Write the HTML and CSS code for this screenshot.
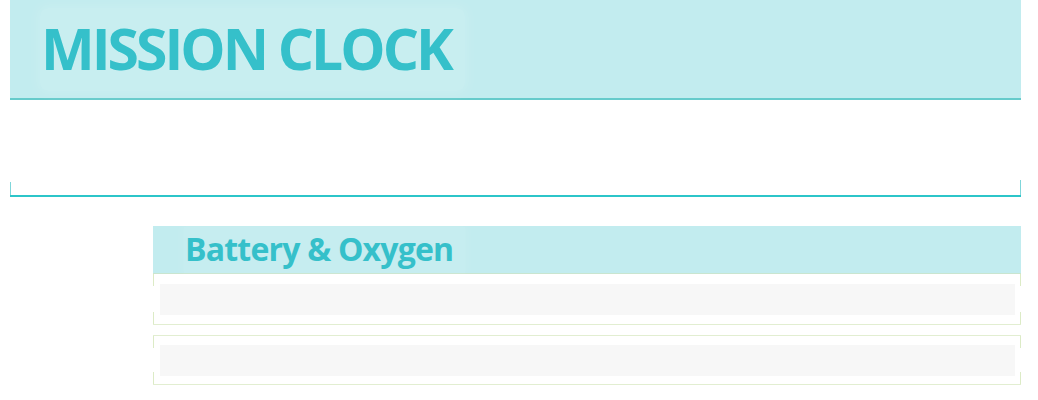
FILE: index.html
```html
<!DOCTYPE html>
<html>
<head>
<meta charset="utf-8">
<link rel="stylesheet" href="styles.css">
</head>
<body>
<div class="page">
  <header class="masthead">
    <h1 class="title">MISSION CLOCK</h1>
  </header>
  <div class="clock-panel"></div>
  <section class="module">
    <div class="module-head">
      <h2 class="module-title">Battery &amp; Oxygen</h2>
    </div>
    <div class="row row-first"><div class="bar"></div></div>
    <div class="row"><div class="bar"></div></div>
  </section>
</div>
</body>
</html>
```
FILE: styles.css
```css
html, body {
  margin: 0;
  padding: 0;
  background: #ffffff;
}
.page {
  width: 1011px;
  margin-left: 10px;
  font-family: "Open Sans", "Liberation Sans", sans-serif;
}
.masthead {
  height: 98px;
  background: #c2ecef;
  border-bottom: 2px solid #66cbcb;
  box-sizing: content-box;
  display: flex;
  align-items: center;
  padding-left: 30px;
}
.title {
  margin: 0;
  font-size: 57px;
  font-weight: 700;
  letter-spacing: -3px;
  line-height: 1;
  color: #35c0ca;
  padding: 12px 14px 14px 1px;
  background: rgba(255, 255, 255, 0.1);
  box-shadow: 0 0 12px 4px rgba(255, 255, 255, 0.1);
  border-radius: 8px;
}
.clock-panel {
  height: 95px;
  border-bottom: 2px solid #2cc5c9;
  background:
    linear-gradient(#7fd6da, #7fd6da) left bottom / 1px 13px no-repeat,
    linear-gradient(#7fd6da, #7fd6da) right bottom / 1px 15px no-repeat;
}
.module {
  margin: 29px 0 0 143px;
  width: 868px;
}
.module-head {
  height: 47px;
  background: #c2ecef;
  border-bottom: 1px solid #c9e5cf;
  display: flex;
  align-items: center;
  padding-left: 31px;
}
.module-title {
  margin: 0;
  font-size: 32px;
  font-weight: 700;
  letter-spacing: -0.8px;
  line-height: 1;
  color: #35c0ca;
  padding: 6px 12px 8px 1px;
  background: rgba(255, 255, 255, 0.08);
  box-shadow: 0 0 8px 3px rgba(255, 255, 255, 0.08);
}
.row {
  border-top: 1px solid #e2eed1;
  border-bottom: 1px solid #e2eed1;
  padding: 9px 6px 8px 7px;
  background:
    linear-gradient(#dcebc6, #dcebc6) left top / 1px 12px no-repeat,
    linear-gradient(#dcebc6, #dcebc6) right top / 1px 12px no-repeat,
    linear-gradient(#dcebc6, #dcebc6) left bottom / 1px 12px no-repeat,
    linear-gradient(#dcebc6, #dcebc6) right bottom / 1px 12px no-repeat;
}
.row-first {
  border-top: none;
  padding-top: 10px;
  padding-bottom: 9px;
}
.row + .row {
  margin-top: 10px;
}
.bar {
  height: 31px;
  background: #f7f7f7;
}
```
